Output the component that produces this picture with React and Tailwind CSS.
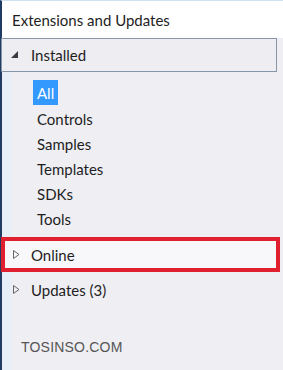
export default function App() {
  const font = { fontFamily: 'Lato, "Noto Sans", sans-serif' };
  const children = ["All", "Controls", "Samples", "Templates", "SDKs", "Tools"];
  return (
    <div
      className="w-[283px] h-[370px] flex flex-col overflow-hidden bg-[#efeef3] bg-[linear-gradient(to_right,#1f3b63_0,#1f3b63_2px,#e7eef8_2px,#e7eef8_11px,#efeef3_12px)] text-[#1e1e1e]"
      style={font}
    >
      <div className="h-[38px] shrink-0 bg-white border-l-2 border-[#1f3b63] border-t border-t-[#cfe0f0] flex items-center pl-[10px] pt-[1px] text-[15px]">
        Extensions and Updates
      </div>
      <div className="ml-[1px] mr-[6px] h-[34px] shrink-0 border border-[#8796a6] bg-[#eeedf1] flex items-center text-[15px]">
        <svg width="8" height="8" viewBox="0 0 8 8" className="ml-[9px] mr-[12px]">
          <polygon points="7,0 7,7 0,7" fill="#3c3c3c" />
        </svg>
        <span>Installed</span>
      </div>
      <div className="flex flex-col pt-[8px] pl-[33px] text-[15px]">
        {children.map((c, i) => (
          <div key={c} className="h-[25px] flex items-center">
            <span
              className={
                i === 0
                  ? "bg-[#3399ff] text-white px-[4px] h-[25px] flex items-center pt-[2px]"
                  : "px-[4px] pt-[3px]"
              }
            >
              {c}
            </span>
          </div>
        ))}
      </div>
      <div className="mt-[7px] ml-[1px] mr-[3px] h-[35px] shrink-0 border-[4px] border-[#e0202f] bg-[#f8f8fa] flex items-center text-[15px]">
        <svg width="7" height="9" viewBox="0 0 7 9" className="ml-[8px] mr-[11px]">
          <polygon points="0.5,0.5 6,4.5 0.5,8.5" fill="none" stroke="#666" strokeWidth="1" />
        </svg>
        <span className="pt-[1px]">Online</span>
      </div>
      <div className="h-[35px] shrink-0 flex items-center text-[15px]">
        <svg width="7" height="9" viewBox="0 0 7 9" className="ml-[13px] mr-[11px]">
          <polygon points="0.5,0.5 6,4.5 0.5,8.5" fill="none" stroke="#666" strokeWidth="1" />
        </svg>
        <span className="pt-[1px]">Updates (3)</span>
      </div>
      <div
        className="mt-[30px] pl-[21px] text-[14px] text-[#555] tracking-[0.2px]"
        style={{ fontFamily: '"Liberation Sans", Arial, sans-serif' }}
      >
        TOSINSO.COM
      </div>
    </div>
  );
}
